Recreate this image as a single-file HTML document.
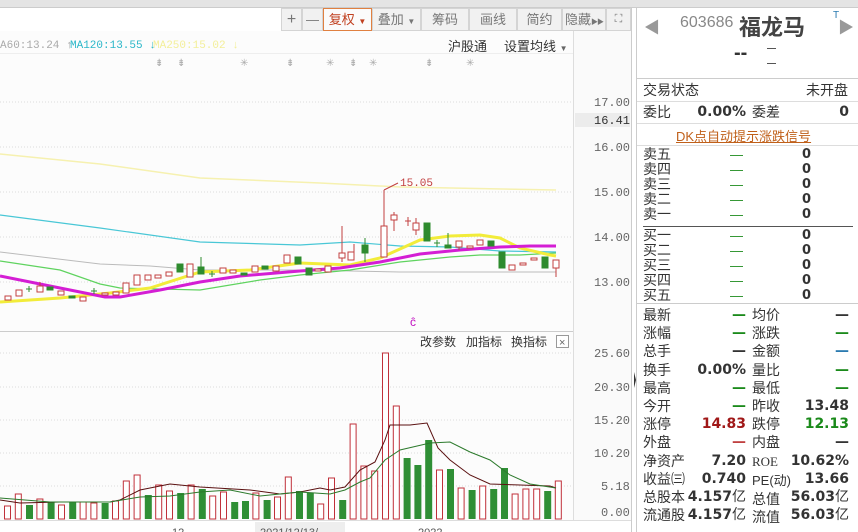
<!DOCTYPE html>
<html><head><meta charset="utf-8">
<style>
*{margin:0;padding:0;box-sizing:border-box}
body{width:858px;height:532px;overflow:hidden;background:#fff;font-family:"Liberation Sans","Noto Sans CJK SC",sans-serif;position:relative;color:#333}
.abs{position:absolute}
.top{left:0;top:0;width:858px;height:8px;background:#e4e4e4;border-bottom:1px solid #ccc}
.tb{top:8px;height:23px;background:#f1f1f1;border:1px solid #d4d4d4;font-size:13px;color:#777;text-align:center;line-height:21px;white-space:nowrap;overflow:hidden}
.rp{left:636px;top:8px;width:222px;height:524px;background:#fff;border-left:1px solid #ccc}
.row{position:absolute;left:643px;font-size:14px;line-height:18px;color:#333;white-space:nowrap}
.v{position:absolute;font-size:14px;font-weight:bold;text-align:right;line-height:18px;font-family:"DejaVu Sans","Noto Sans CJK SC",sans-serif}
.g{color:#1a8a1a}
</style></head><body>
<div class="abs top"></div>
<svg class="abs" style="left:0;top:8px" width="636" height="524" viewBox="0 8 636 524">
<rect x="0" y="31" width="573" height="491" fill="#fcfcfc"/>
<rect x="573" y="31" width="58" height="491" fill="#fafafa"/>
<line x1="573.5" y1="31" x2="573.5" y2="520" stroke="#ddd"/>
<line x1="631.5" y1="8" x2="631.5" y2="532" stroke="#ccc"/>
<line x1="0" y1="53.5" x2="573" y2="53.5" stroke="#eee"/>
<line x1="0" y1="331.5" x2="573" y2="331.5" stroke="#ccc"/>
<g stroke="#ddd" stroke-dasharray="1,2">
<line x1="0" y1="102" x2="573" y2="102"/><line x1="0" y1="147" x2="573" y2="147"/><line x1="0" y1="192" x2="573" y2="192"/><line x1="0" y1="237" x2="573" y2="237"/><line x1="0" y1="282" x2="573" y2="282"/>
<line x1="0" y1="353" x2="573" y2="353"/><line x1="0" y1="387" x2="573" y2="387"/><line x1="0" y1="420" x2="573" y2="420"/><line x1="0" y1="453" x2="573" y2="453"/><line x1="0" y1="486" x2="573" y2="486"/>
</g>
<g font-family="Liberation Mono,monospace" font-size="12" fill="#666">
<text x="594" y="106">17.00</text>
<rect x="575" y="113" width="55" height="14" fill="#ececec"/>
<text x="594" y="124" fill="#333">16.41</text>
<text x="594" y="151">16.00</text><text x="594" y="196">15.00</text><text x="594" y="241">14.00</text><text x="594" y="286">13.00</text>
<text x="594" y="357">25.60</text><text x="594" y="391">20.30</text><text x="594" y="424">15.20</text><text x="594" y="457">10.20</text><text x="601" y="490">5.18</text><text x="601" y="516">0.00</text>
</g>
<g font-family="Liberation Mono,monospace" font-size="11">
<text x="0" y="48" fill="#aaa">A60:13.24 ↑</text>
<text x="70" y="48" fill="#2bb7c9">MA120:13.55 ↓</text>
<text x="153" y="48" fill="#f3ef9a">MA250:15.02 ↓</text>
</g>
<g fill="#aaa" font-size="10"><text x="155" y="66">⇟</text><text x="177" y="66">⇟</text><text x="240" y="66">✳</text><text x="286" y="66">⇟</text><text x="326" y="66">✳</text><text x="349" y="66">⇟</text><text x="369" y="66">✳</text><text x="425" y="66">⇟</text><text x="466" y="66">✳</text></g>
<polyline fill="none" stroke="#f6f1b0" stroke-width="1.5" points="0,154 100,164 200,178 320,183 400,187 556,190"/>
<polyline fill="none" stroke="#49c7d6" stroke-width="1.2" points="0,215 100,228 200,242 300,245 350,242 400,246 450,247 500,251 556,252"/>
<polyline fill="none" stroke="#bbb" stroke-width="1" points="0,252 100,264 150,266 200,270 300,270 400,272 500,272 556,272"/>
<polyline fill="none" stroke="#5fd35f" stroke-width="1.2" points="0,261 60,270 100,284 120,288 200,290 260,280 300,275 350,270 400,262 450,257 480,255 520,255 556,253"/>
<polyline fill="none" stroke="#f2ec3a" stroke-width="3" points="0,302 60,298 110,293 150,288 200,272 250,270 300,263 350,265 380,258 420,240 450,236 480,235 500,238 520,248 550,255 556,256"/>
<polyline fill="none" stroke="#d41ed4" stroke-width="3" points="0,276 60,288 105,297 120,297 160,290 200,282 240,276 300,271 340,268 380,262 420,254 460,250 500,247 530,246 556,246"/>
<g stroke="#c24040" fill="#fff" stroke-width="1">
<rect x="5" y="296" width="6" height="4"/><rect x="16" y="290" width="6" height="6"/><rect x="37" y="286" width="6" height="6"/><rect x="58" y="291" width="6" height="4"/><rect x="80" y="297" width="6" height="4"/><rect x="102" y="293" width="6" height="2"/><rect x="113" y="292" width="6" height="3"/><rect x="123" y="283" width="6" height="10"/><rect x="134" y="275" width="6" height="10"/><rect x="145" y="275" width="6" height="5"/><rect x="155" y="275" width="6" height="3"/><rect x="166" y="272" width="6" height="4"/><rect x="187" y="264" width="6" height="13"/><rect x="220" y="268" width="6" height="5"/><rect x="230" y="270" width="6" height="3"/><rect x="252" y="266" width="6" height="6"/><rect x="273" y="266" width="6" height="5"/><rect x="284" y="255" width="6" height="8"/><rect x="315" y="269" width="6" height="2"/><rect x="325" y="266" width="6" height="6"/><rect x="339" y="253" width="6" height="5"/><rect x="348" y="252" width="6" height="8"/><rect x="381" y="226" width="6" height="31"/><rect x="391" y="215" width="6" height="5"/><rect x="413" y="223" width="6" height="7"/><rect x="456" y="241" width="6" height="6"/><rect x="467" y="246" width="6" height="2"/><rect x="477" y="240" width="6" height="5"/><rect x="509" y="265" width="6" height="5"/><rect x="520" y="263" width="6" height="2"/><rect x="531" y="258" width="6" height="2"/><rect x="553" y="260" width="6" height="8"/>
<path d="M40 282V286M342 226V253M342 258V262M354 244V252M384 190V226M384 190L398 183M394 212V215M394 220V231M416 218V223M416 230V235M459 247V250M556 268V277M405 221H411M408 217V226"/>
</g>
<text x="400" y="186" font-size="11" fill="#c24040" font-family="Liberation Mono,monospace">15.05</text>
<g fill="#2e8b2e" stroke="#2e8b2e">
<rect x="47" y="287" width="6" height="3"/><rect x="69" y="296" width="6" height="2"/><rect x="177" y="264" width="6" height="8"/><rect x="198" y="267" width="6" height="7"/><rect x="241" y="273" width="6" height="2"/><rect x="262" y="266" width="6" height="3"/><rect x="295" y="257" width="6" height="7"/><rect x="306" y="268" width="6" height="7"/><rect x="362" y="245" width="6" height="8"/><rect x="424" y="223" width="6" height="18"/><rect x="445" y="245" width="6" height="3"/><rect x="488" y="241" width="6" height="5"/><rect x="499" y="252" width="6" height="16"/><rect x="542" y="257" width="6" height="11"/>
<path d="M26 289H32M29 286V292M91 291H97M94 288V294M209 274H215M212 271V277M434 243H440M437 240V247M201 257V267M365 238V262M448 233V245" fill="none"/>
</g>
<text x="410" y="326" font-size="12" fill="#c010c0">ĉ</text>
<g font-size="12" fill="#333" font-family="Liberation Sans,Noto Sans CJK SC,sans-serif">
<text x="420" y="346">改参数</text><text x="466" y="346">加指标</text><text x="511" y="346">换指标</text></g>
<rect x="556.5" y="335.5" width="12" height="12" fill="#fff" stroke="#999"/><text x="559" y="346" font-size="11" fill="#666">×</text>
<g stroke="#c0303a" fill="#fff">
<rect x="4.5" y="506" width="6" height="13"/><rect x="15.3" y="494" width="6" height="25"/><rect x="36.9" y="499" width="6" height="20"/><rect x="58.5" y="505" width="6" height="14"/><rect x="80.1" y="502" width="6" height="17"/><rect x="90.9" y="503" width="6" height="16"/><rect x="112.5" y="501" width="6" height="18"/><rect x="123.3" y="481" width="6" height="38"/><rect x="134.1" y="475" width="6" height="44"/><rect x="155.7" y="485" width="6" height="34"/><rect x="166.5" y="491" width="6" height="28"/><rect x="188.1" y="485" width="6" height="34"/><rect x="209.7" y="496" width="6" height="23"/><rect x="220.5" y="492" width="6" height="27"/><rect x="252.9" y="493" width="6" height="26"/><rect x="274.5" y="497" width="6" height="22"/><rect x="285.3" y="477" width="6" height="42"/><rect x="317.7" y="504" width="6" height="15"/><rect x="328.5" y="478" width="6" height="41"/><rect x="350.1" y="424" width="6" height="95"/><rect x="360.9" y="466" width="6" height="53"/><rect x="371.7" y="471" width="6" height="48"/><rect x="382.5" y="353" width="6" height="166"/><rect x="393.3" y="406" width="6" height="113"/><rect x="436.5" y="470" width="6" height="49"/><rect x="458.1" y="488" width="6" height="31"/><rect x="479.7" y="486" width="6" height="33"/><rect x="512.1" y="494" width="6" height="25"/><rect x="522.9" y="489" width="6" height="30"/><rect x="533.7" y="489" width="6" height="30"/><rect x="555.3" y="481" width="6" height="38"/>
</g>
<g fill="#2f8f35">
<rect x="26" y="505" width="7" height="14"/><rect x="47.6" y="502" width="7" height="17"/><rect x="69.2" y="502" width="7" height="17"/><rect x="101.6" y="503" width="7" height="16"/><rect x="144.8" y="495" width="7" height="24"/><rect x="177.2" y="493" width="7" height="26"/><rect x="198.8" y="489" width="7" height="30"/><rect x="231.2" y="502" width="7" height="17"/><rect x="242" y="501" width="7" height="18"/><rect x="263.6" y="500" width="7" height="19"/><rect x="296" y="491" width="7" height="28"/><rect x="306.8" y="493" width="7" height="26"/><rect x="339.2" y="500" width="7" height="19"/><rect x="403.6" y="458" width="7" height="61"/><rect x="414.4" y="465" width="7" height="54"/><rect x="425.2" y="440" width="7" height="79"/><rect x="447" y="469" width="7" height="50"/><rect x="468.6" y="490" width="7" height="29"/><rect x="490.2" y="489" width="7" height="30"/><rect x="501" y="468" width="7" height="51"/><rect x="544.2" y="491" width="7" height="28"/>
</g>
<polyline fill="none" stroke="#5a1010" stroke-width="1" points="0,500 20,503 60,502 110,502 120,500 140,490 170,484 200,487 250,490 280,494 300,492 320,488 330,490 345,487 360,470 375,462 385,440 390,425 400,425 410,425 427,423 438,448 450,460 470,475 490,484 520,485 550,486 556,488"/>
<polyline fill="none" stroke="#2c7a2c" stroke-width="1" points="0,498 50,502 110,502 140,497 170,496 200,492 230,490 260,496 300,492 330,494 345,490 360,482 370,478 385,460 400,450 430,443 450,442 470,452 490,460 510,475 530,484 556,488"/>
<rect x="0" y="520" width="631" height="12" fill="#fff"/>
<line x1="0" y1="520.5" x2="631" y2="520.5" stroke="#ddd"/>
<rect x="255" y="522" width="90" height="10" fill="#eee"/>
<g font-size="11" fill="#555"><text x="172" y="536">12</text><text x="260" y="536">2021/12/13/</text><text x="418" y="536">2022</text></g>
<path d="M634 372L636 380L634 388Z" fill="#333"/>
</svg>
<div class="abs tb" style="left:281px;width:21px;font-size:16px">+</div>
<div class="abs tb" style="left:302px;width:21px">—</div>
<div class="abs tb" style="left:323px;width:49px;border-color:#e08040;color:#c04020;background:#fbfbfb">复权 <span style="font-size:8px;color:#c04020">▼</span></div>
<div class="abs tb" style="left:372px;width:49px">叠加 <span style="font-size:8px">▼</span></div>
<div class="abs tb" style="left:421px;width:48px">筹码</div>
<div class="abs tb" style="left:469px;width:48px">画线</div>
<div class="abs tb" style="left:517px;width:45px">简约</div>
<div class="abs tb" style="left:562px;width:44px">隐藏<span style="font-size:7px;letter-spacing:-1px">▶▶</span></div>
<div class="abs tb" style="left:606px;width:25px;font-size:11px">⛶</div>
<div class="abs" style="left:448px;top:36px;font-size:13px;color:#333">沪股通</div>
<div class="abs" style="left:504px;top:36px;font-size:13px;color:#333">设置均线 <span style="font-size:8px;color:#666">▼</span></div>
<div class="abs rp"></div>
<div class="abs" style="left:644px;top:14px;font-size:16px;color:#999">◀</div>
<div class="abs" style="left:838px;top:14px;font-size:16px;color:#999">▶</div>
<div class="abs" style="left:833px;top:10px;font-size:10px;color:#2a7ab0">T</div>
<div class="abs" style="left:680px;top:14px;font-size:16px;color:#888">603686</div>
<div class="abs" style="left:739px;top:10px;font-size:22px;font-weight:bold;color:#444;font-family:'Noto Sans CJK SC',sans-serif">福龙马</div>
<div class="abs" style="left:734px;top:42px;font-size:20px;font-weight:bold;color:#333">--</div>
<div class="abs" style="left:767px;top:48px;width:9px;height:1px;background:#555"></div>
<div class="abs" style="left:767px;top:63px;width:9px;height:1px;background:#555"></div>
<div class="abs" style="left:637px;top:78px;width:221px;height:1px;background:#ccc"></div>
<div class="row" style="top:81px">交易状态</div><div class="row" style="top:81px;left:806px">未开盘</div>
<div class="abs" style="left:637px;top:101px;width:221px;height:1px;background:#ddd"></div>
<div class="row" style="top:103px">委比</div><div class="v" style="top:103px;left:690px;width:56px">0.00%</div>
<div class="row" style="top:103px;left:752px">委差</div><div class="v" style="top:103px;left:800px;width:49px">0</div>
<div class="abs" style="left:637px;top:123px;width:221px;height:1px;background:#ddd"></div>
<div class="abs" style="left:676px;top:126px;font-size:13px;color:#c0601a;text-decoration:underline">DK点自动提示涨跌信号</div>
<div class="abs" style="left:637px;top:145px;width:221px;height:1px;background:#ddd"></div>
<div class="abs" style="left:643px;top:147px;font-size:14px;line-height:15px;color:#333">卖五<br>卖四<br>卖三<br>卖二<br>卖一</div>
<div class="abs g" style="left:730px;top:147px;font-size:13px;line-height:15px">—<br>—<br>—<br>—<br>—</div>
<div class="abs" style="left:802px;top:147px;font-size:13px;line-height:15px;font-weight:bold;font-family:'DejaVu Sans',sans-serif">0<br>0<br>0<br>0<br>0</div>
<div class="abs" style="left:643px;top:226px;width:210px;height:1px;background:#555"></div>
<div class="abs" style="left:643px;top:228px;font-size:14px;line-height:15px;color:#333">买一<br>买二<br>买三<br>买四<br>买五</div>
<div class="abs g" style="left:730px;top:228px;font-size:13px;line-height:15px">—<br>—<br>—<br>—<br>—</div>
<div class="abs" style="left:802px;top:228px;font-size:13px;line-height:15px;font-weight:bold;font-family:'DejaVu Sans',sans-serif">0<br>0<br>0<br>0<br>0</div>
<div class="abs" style="left:637px;top:303px;width:221px;height:1px;background:#ccc"></div>
<div class="abs" style="left:643px;top:306px;font-size:14px;line-height:18.2px;color:#333">最新<br>涨幅<br>总手<br>换手<br>最高<br>今开<br>涨停<br>外盘<br>净资产<br>收益㈢<br>总股本<br>流通股</div>
<div class="abs" style="left:752px;top:306px;font-size:14px;line-height:18.2px;color:#333">均价<br>涨跌<br>金额<br>量比<br>最低<br>昨收<br>跌停<br>内盘<br><span style="font-family:'Liberation Serif',serif;font-size:13px">ROE</span><br><span style="font-size:13px">PE(动)</span><br>总值<br>流值</div>
<div class="abs" style="left:660px;top:306px;width:86px;text-align:right;font-size:14px;line-height:18.2px;font-weight:bold;font-family:'DejaVu Sans','Noto Sans CJK SC',sans-serif"><span class="g">—</span><br><span class="g">—</span><br><span style="color:#333">—</span><br>0.00%<br><span class="g">—</span><br><span class="g">—</span><br><span style="color:#a01818">14.83</span><br><span style="color:#c04040">—</span><br>7.20<br>0.740<br>4.157<span style="font-weight:normal">亿</span><br>4.157<span style="font-weight:normal">亿</span></div>
<div class="abs" style="left:770px;top:306px;width:79px;text-align:right;font-size:14px;line-height:18.2px;font-weight:bold;font-family:'DejaVu Sans','Noto Sans CJK SC',sans-serif"><span style="color:#333">—</span><br><span class="g">—</span><br><span style="color:#2a7ab0">—</span><br><span class="g">—</span><br><span class="g">—</span><br>13.48<br><span class="g">12.13</span><br><span style="color:#333">—</span><br>10.62%<br>13.66<br>56.03<span style="font-weight:normal">亿</span><br>56.03<span style="font-weight:normal">亿</span></div>
</body></html>
